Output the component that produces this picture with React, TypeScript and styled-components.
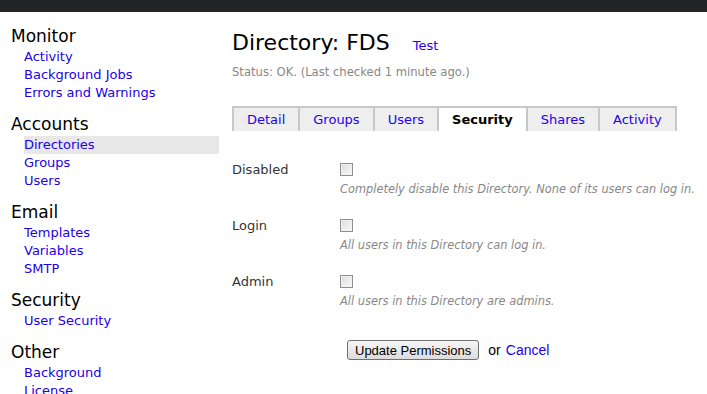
import styled, { createGlobalStyle } from "styled-components";

const GlobalStyle = createGlobalStyle`
  body {
    margin: 0;
    background: #ffffff;
    font-family: "DejaVu Sans", Verdana, sans-serif;
    font-size: 13px;
    color: #333;
  }
`;

const TopBar = styled.div`
  height: 12px;
  background: #222426;
`;

const Layout = styled.div`
  display: flex;
  align-items: flex-start;
`;

const Sidebar = styled.nav`
  width: 208px;
  padding: 12px 0 0 11px;
  flex-shrink: 0;
`;

const NavSection = styled.div`
  margin-bottom: 10px;
`;

const NavHeading = styled.div`
  font-size: 17px;
  line-height: 24px;
  color: #000;
`;

const NavList = styled.div`
  padding-left: 13px;
`;

const NavLink = styled.a<{ $active?: boolean }>`
  display: block;
  line-height: 18px;
  color: #2200ee;
  text-decoration: none;
  background: ${({ $active }) => ($active ? "#e8e8e8" : "transparent")};
`;

const Main = styled.main`
  flex: 1;
  padding: 17px 0 0 13px;
`;

const TitleRow = styled.div`
  display: flex;
  align-items: baseline;
`;

const Title = styled.h1`
  margin: 0;
  font-size: 22px;
  line-height: 28px;
  font-weight: normal;
  color: #000;
`;

const TitleLink = styled.a`
  margin-left: 23px;
  color: #2200ee;
  text-decoration: none;
`;

const Status = styled.div`
  margin-top: 7px;
  font-size: 11.6px;
  line-height: 16px;
  color: #888;
`;

const Tabs = styled.div`
  display: flex;
  margin: 26px 0 0 0;
`;

const Tab = styled.a<{ $active?: boolean }>`
  display: block;
  height: 23px;
  line-height: 24px;
  padding: 0 13px;
  border: 2px solid #c8c8c8;
  border-bottom: none;
  margin-left: -2px;
  background: ${({ $active }) => ($active ? "#ffffff" : "#eeeeee")};
  color: ${({ $active }) => ($active ? "#000" : "#2200ee")};
  font-weight: ${({ $active }) => ($active ? "bold" : "normal")};
  text-decoration: none;

  &:first-child {
    margin-left: 0;
  }
`;

const Form = styled.div`
  padding-top: 30px;
`;

const FieldRow = styled.div`
  display: grid;
  grid-template-columns: 108px 1fr;
  margin-bottom: 20px;
`;

const FieldLabel = styled.div`
  line-height: 18px;
  color: #333;
`;

const FieldBody = styled.div`
  display: flex;
  flex-direction: column;
`;

const Check = styled.input`
  appearance: none;
  box-sizing: border-box;
  margin: 2px 0 3px;
  width: 13px;
  height: 13px;
  border: 1px solid #8e8e8e;
  background: linear-gradient(135deg, #dcdcdc, #fbfbfb);
  box-shadow: inset 0 0 0 1px #f2f2f2;
`;

const Hint = styled.div`
  margin-top: 3px;
  font-size: 11.4px;
  line-height: 15px;
  font-style: italic;
  color: #888;
`;

const Actions = styled.div`
  display: flex;
  align-items: center;
  margin: 31px 0 0 115px;
  font-family: "Liberation Sans", Arial, sans-serif;
  font-size: 14px;
  color: #000;
`;

const Button = styled.button`
  height: 20px;
  padding: 0 7px;
  border: 1px solid #707070;
  border-radius: 3px;
  background: linear-gradient(#f6f6f6, #dcdcdc);
  font-family: "Liberation Sans", Arial, sans-serif;
  font-size: 13px;
  color: #000;
`;

const Or = styled.span`
  margin: 0 5px 0 9px;
`;

const ActionLink = styled.a`
  color: #2200ee;
  text-decoration: none;
`;

const nav = [
  { title: "Monitor", links: ["Activity", "Background Jobs", "Errors and Warnings"] },
  { title: "Accounts", links: ["Directories", "Groups", "Users"] },
  { title: "Email", links: ["Templates", "Variables", "SMTP"] },
  { title: "Security", links: ["User Security"] },
  { title: "Other", links: ["Background", "License"] },
];

const tabs = ["Detail", "Groups", "Users", "Security", "Shares", "Activity"];

const fields = [
  { label: "Disabled", hint: "Completely disable this Directory. None of its users can log in." },
  { label: "Login", hint: "All users in this Directory can log in." },
  { label: "Admin", hint: "All users in this Directory are admins." },
];

export default function App(): JSX.Element {
  return (
    <>
      <GlobalStyle />
      <TopBar />
      <Layout>
        <Sidebar>
          {nav.map((section) => (
            <NavSection key={section.title}>
              <NavHeading>{section.title}</NavHeading>
              <NavList>
                {section.links.map((link) => (
                  <NavLink key={link} href="#" $active={link === "Directories"}>
                    {link}
                  </NavLink>
                ))}
              </NavList>
            </NavSection>
          ))}
        </Sidebar>
        <Main>
          <TitleRow>
            <Title>Directory: FDS</Title>
            <TitleLink href="#">Test</TitleLink>
          </TitleRow>
          <Status>Status: OK. (Last checked 1 minute ago.)</Status>
          <Tabs>
            {tabs.map((tab) => (
              <Tab key={tab} href="#" $active={tab === "Security"}>
                {tab}
              </Tab>
            ))}
          </Tabs>
          <Form>
            {fields.map((f) => (
              <FieldRow key={f.label}>
                <FieldLabel>{f.label}</FieldLabel>
                <FieldBody>
                  <Check type="checkbox" />
                  <Hint>{f.hint}</Hint>
                </FieldBody>
              </FieldRow>
            ))}
            <Actions>
              <Button>Update Permissions</Button>
              <Or>or</Or>
              <ActionLink href="#">Cancel</ActionLink>
            </Actions>
          </Form>
        </Main>
      </Layout>
    </>
  );
}
